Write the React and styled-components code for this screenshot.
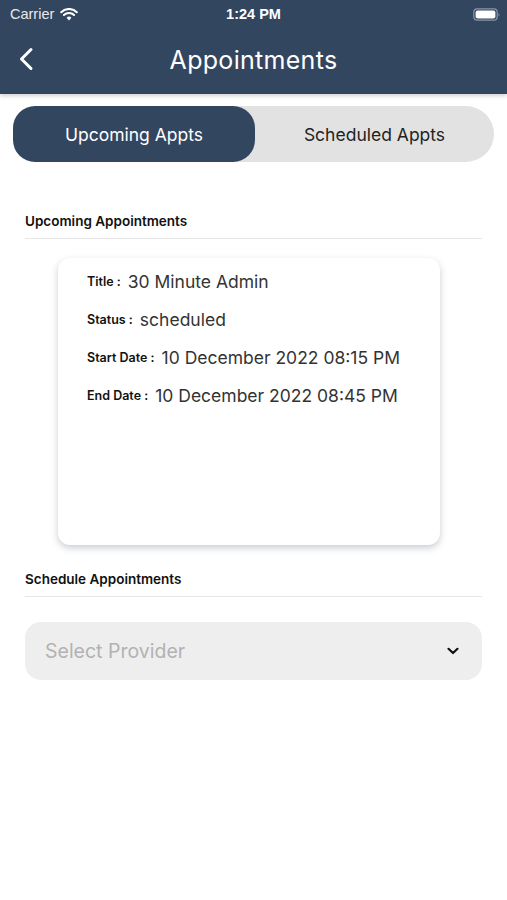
import React, { useState } from "react";
import styled, { createGlobalStyle } from "styled-components";

const GlobalStyle = createGlobalStyle`
  body {
    margin: 0;
    background: #ffffff;
    font-family: "Inter", "Noto Sans", sans-serif;
  }
`;

const NAVY = "#33465f";

const appointments = [
  {
    title: "30 Minute Admin",
    status: "scheduled",
    start: "10 December 2022 08:15 PM",
    end: "10 December 2022 08:45 PM",
  },
];

const App = () => {
  const [tab, setTab] = useState("upcoming");

  return (
    <Page>
      <GlobalStyle />
      <Header>
        <StatusBar>
          <Carrier>
            Carrier
            <svg width="18" height="13" viewBox="0 0 18 13">
              <path
                d="M9 12.5 L6.6 9.8 A3.4 3.4 0 0 1 11.4 9.8 Z"
                fill="#fff"
              />
              <path
                d="M3.9 7 A7.3 7.3 0 0 1 14.1 7"
                stroke="#fff"
                strokeWidth="2"
                fill="none"
                strokeLinecap="round"
              />
              <path
                d="M1.2 4.2 A11 11 0 0 1 16.8 4.2"
                stroke="#fff"
                strokeWidth="2"
                fill="none"
                strokeLinecap="round"
              />
            </svg>
          </Carrier>
          <Clock>1:24 PM</Clock>
          <Battery>
            <svg width="28" height="13" viewBox="0 0 28 13">
              <rect
                x="0.8"
                y="0.8"
                width="23.4"
                height="11.4"
                rx="3.4"
                fill="none"
                stroke="#8c97a6"
                strokeWidth="1.2"
              />
              <rect x="2.6" y="2.6" width="19.8" height="7.8" rx="2" fill="#fff" />
              <path d="M25.6 4.5 Q27.2 6.5 25.6 8.5 Z" fill="#8c97a6" />
            </svg>
          </Battery>
        </StatusBar>
        <NavBar>
          <BackButton aria-label="Back">
            <svg width="16" height="24" viewBox="0 0 16 24">
              <path
                d="M13 2.5 L3.5 12 L13 21.5"
                stroke="#fff"
                strokeWidth="3"
                fill="none"
                strokeLinecap="round"
                strokeLinejoin="round"
              />
            </svg>
          </BackButton>
          <NavTitle>Appointments</NavTitle>
        </NavBar>
      </Header>

      <Content>
        <Segmented>
          <Segment active={tab === "upcoming"} onClick={() => setTab("upcoming")}>
            Upcoming Appts
          </Segment>
          <Segment active={tab === "scheduled"} onClick={() => setTab("scheduled")}>
            Scheduled Appts
          </Segment>
        </Segmented>

        <SectionTitle top="50px">Upcoming Appointments</SectionTitle>
        <Divider />

        {appointments.map((a) => (
          <Card key={a.title}>
            <InfoRow>
              <Label>Title :</Label>
              <Value>{a.title}</Value>
            </InfoRow>
            <InfoRow>
              <Label>Status :</Label>
              <Value>{a.status}</Value>
            </InfoRow>
            <InfoRow>
              <Label>Start Date :</Label>
              <Value>{a.start}</Value>
            </InfoRow>
            <InfoRow>
              <Label>End Date :</Label>
              <Value>{a.end}</Value>
            </InfoRow>
          </Card>
        ))}

        <SectionTitle top="25px">Schedule Appointments</SectionTitle>
        <Divider />

        <Select>
          <Placeholder>Select Provider</Placeholder>
          <svg width="14" height="10" viewBox="0 0 14 10">
            <path
              d="M2.5 2.8 L7 7 L11.5 2.8"
              stroke="#111"
              strokeWidth="2.2"
              fill="none"
              strokeLinecap="round"
              strokeLinejoin="round"
            />
          </svg>
        </Select>
      </Content>
    </Page>
  );
};

export default App;

const Page = styled.div`
  width: 507px;
  min-height: 900px;
  background: #fff;
`;

const Header = styled.div`
  background: ${NAVY};
  height: 94px;
  box-shadow: 0 2px 4px rgba(0, 0, 0, 0.18);
  display: flex;
  flex-direction: column;
`;

const StatusBar = styled.div`
  height: 28px;
  display: grid;
  grid-template-columns: 1fr auto 1fr;
  align-items: center;
  padding: 0 10px 0 10px;
  color: #fff;
  font-family: "Liberation Sans", Arial, sans-serif;
  font-size: 14.5px;
`;

const Carrier = styled.div`
  display: flex;
  align-items: center;
  gap: 6px;
  color: #e6e9ee;
`;

const Clock = styled.div`
  font-weight: bold;
  text-align: center;
`;

const Battery = styled.div`
  display: flex;
  justify-content: flex-end;
  margin-right: -4px;
`;

const NavBar = styled.div`
  flex: 1;
  position: relative;
  display: flex;
  align-items: center;
  justify-content: center;
  padding-bottom: 2px;
`;

const BackButton = styled.button`
  position: absolute;
  left: 18px;
  top: 19px;
  background: none;
  border: none;
  padding: 0;
  display: flex;
`;

const NavTitle = styled.h1`
  margin: 0;
  color: #fff;
  font-size: 25px;
  font-weight: 400;
  letter-spacing: 0.3px;
`;

const Content = styled.div`
  padding: 12px 25px 0 25px;
  display: flex;
  flex-direction: column;
`;

const Segmented = styled.div`
  margin: 0 -12px 0 -12px;
  height: 56px;
  display: grid;
  grid-template-columns: 242px 1fr;
  background: #e2e2e2;
  border-radius: 28px;
`;

const Segment = styled.button`
  border: none;
  border-radius: ${(p) => (p.active ? "22px" : "28px")};
  background: ${(p) => (p.active ? NAVY : "transparent")};
  color: ${(p) => (p.active ? "#fff" : "#222")};
  font-family: inherit;
  font-size: 17.5px;
  font-weight: 400;
  cursor: pointer;
`;

const SectionTitle = styled.div`
  margin-top: ${(p) => p.top};
  font-size: 13.5px;
  font-weight: 600;
  color: #111;
  line-height: 18px;
`;

const Divider = styled.div`
  margin-top: 8px;
  height: 1px;
  width: 457px;
  background: #e6e6e6;
`;

const Card = styled.div`
  margin: 19px 0 0 33px;
  width: 382px;
  height: 287px;
  box-sizing: border-box;
  background: #fff;
  border-radius: 12px;
  box-shadow: 0 3px 7px rgba(60, 75, 95, 0.28);
  padding: 11px 0 0 29px;
  display: flex;
  flex-direction: column;
  gap: 14px;
`;

const InfoRow = styled.div`
  display: flex;
  align-items: center;
  gap: 7px;
  height: 24px;
`;

const Label = styled.span`
  font-size: 12.5px;
  font-weight: 600;
  color: #111;
`;

const Value = styled.span`
  font-size: 17.5px;
  color: #333;
`;

const Select = styled.div`
  margin-top: 25px;
  width: 457px;
  height: 58px;
  box-sizing: border-box;
  background: #eeeeee;
  border-radius: 16px;
  display: flex;
  align-items: center;
  justify-content: space-between;
  padding: 0 22px 0 20px;
`;

const Placeholder = styled.span`
  font-size: 19.5px;
  color: #b2b2b2;
`;
